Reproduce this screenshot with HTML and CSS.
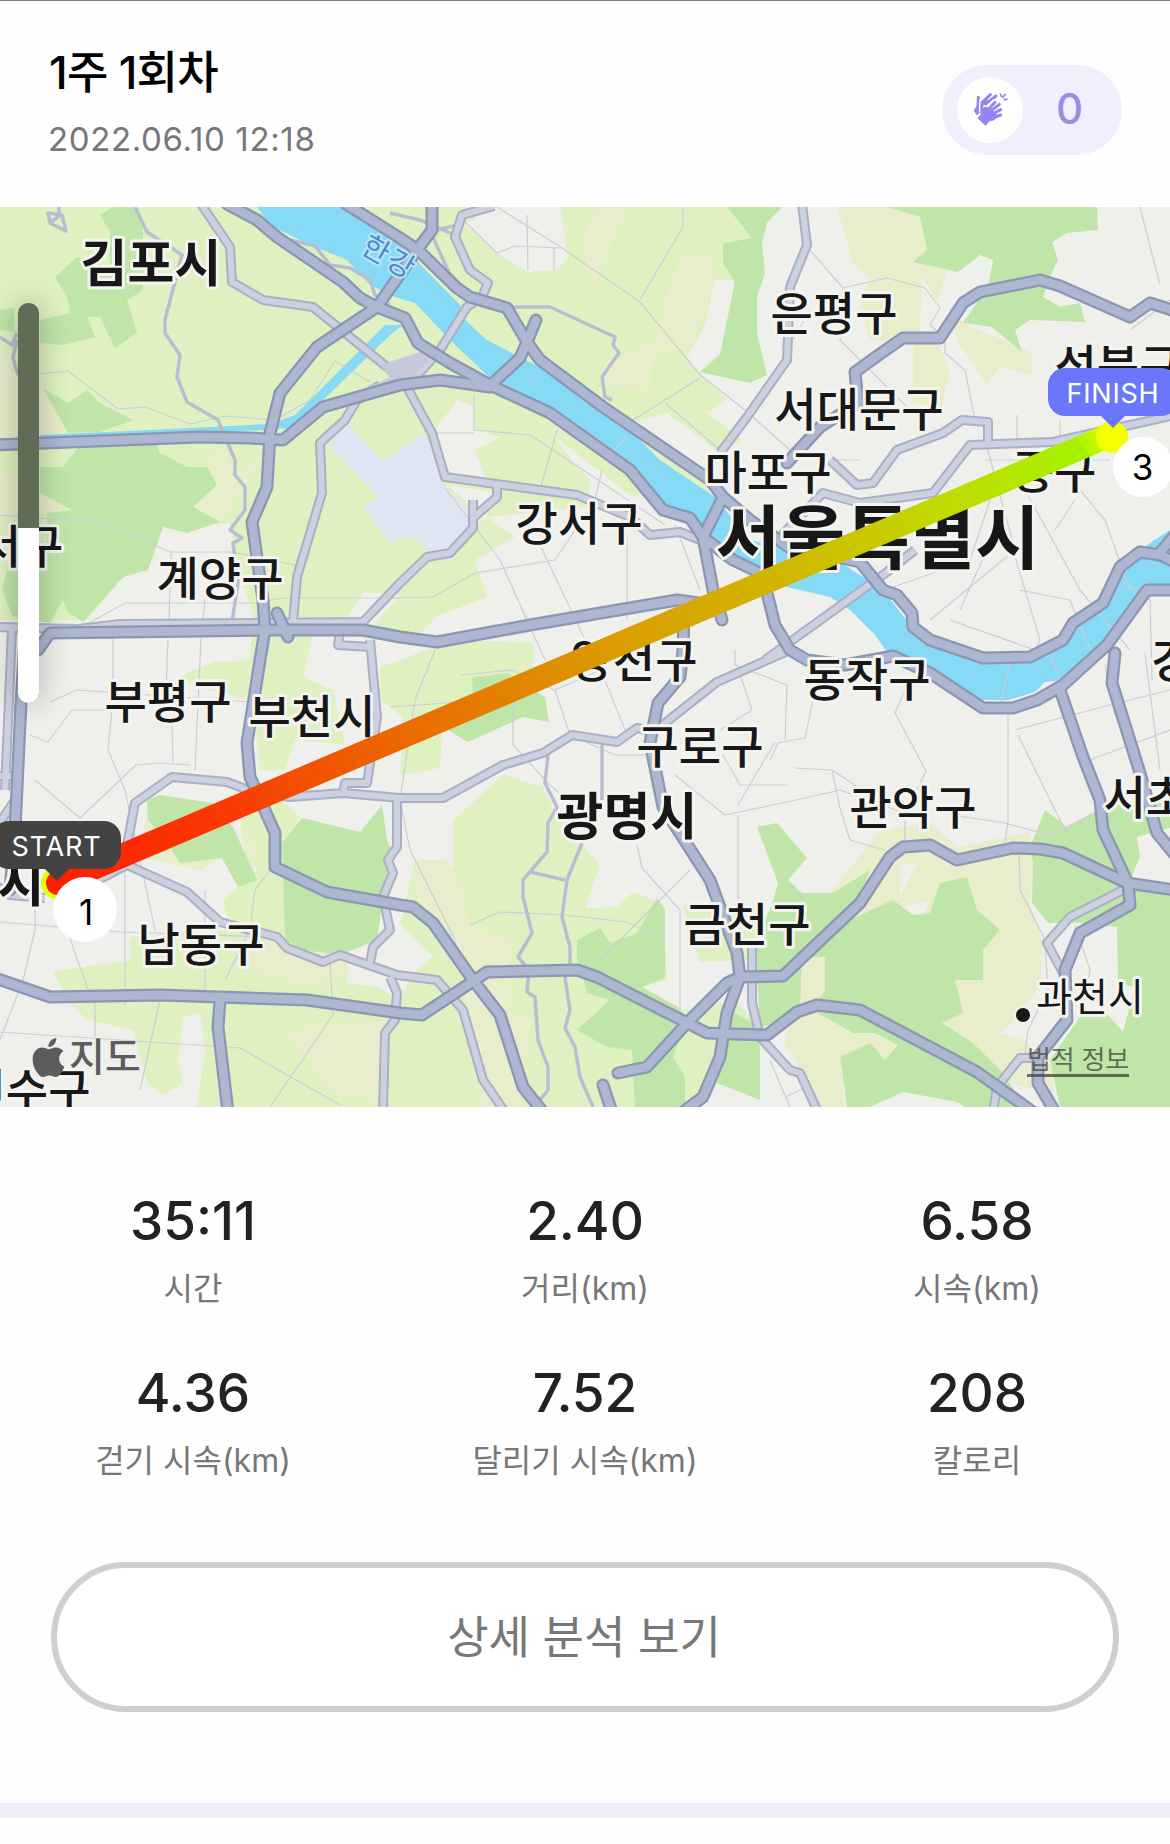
FILE: index.html
```html
<!DOCTYPE html>
<html lang="ko">
<head>
  <meta charset="UTF-8">
  <meta name="viewport" content="width=device-width, initial-scale=1.0">
  <title>1주 1회차</title>
  <link rel="stylesheet" href="styles.css">
</head>
<body>
  <header class="header">
    <div class="header-text">
      <h1 class="title">1주 1회차</h1>
      <p class="date">2022.06.10 12:18</p>
    </div>
    <button class="clap">
      <span class="clap-icon">
        <svg viewBox="0 0 150 150" width="50" height="50">
          <defs>
            <g id="front-hand" stroke-linecap="round" stroke-linejoin="round">
              <path d="M51 52L50 82M62 82L90 52M70 84L103 58M78 90L107 74M86 98L107 90" stroke-width="9" fill="none"/>
              <path d="M50 76L60 66 78 72 98 92 88 104 72 108 62 121 39 99 49 88Z" stroke-width="3"/>
            </g>
          </defs>
          <g stroke="currentColor" fill="none" stroke-linecap="round">
            <path d="M40 37L39 68M50 54L76 29M60 58L93 33" stroke-width="9"/>
            <path d="M106 27l3 7M121 28l-8 9M126 43l-9 1" stroke-width="5"/>
          </g>
          <path fill="currentColor" d="M35 62L50 46 70 46 60 75 38 94 26 77Z"/>
          <use href="#front-hand" class="clap-gap"/>
          <use href="#front-hand" fill="currentColor" stroke="currentColor"/>
        </svg>
      </span>
      <span class="clap-count">0</span>
    </button>
  </header>

  <section class="map">
    <svg class="map-canvas" viewBox="0 207 1170 900" width="1170" height="900">
      <defs>
        <linearGradient id="pace" gradientUnits="userSpaceOnUse" x1="57" y1="884" x2="1113" y2="434">
          <stop offset="0" stop-color="#ff1e00"/>
          <stop offset=".14" stop-color="#fb3502"/>
          <stop offset=".33" stop-color="#ea6a00"/>
          <stop offset=".52" stop-color="#db9a02"/>
          <stop offset=".7" stop-color="#d0b900"/>
          <stop offset=".85" stop-color="#c0dc00"/>
          <stop offset=".97" stop-color="#a6f200"/>
          <stop offset="1" stop-color="#f4ff00"/>
        </linearGradient>
        <g id="highways">
          <path d="M227 204L257 220 277 237 343 282 360 298 377 307 405 318 418 343 450 363 490 385 550 413 630 470 663 510 690 518 703 537 733 560 760 573 767 593 775 625 790 650 807 660 845 665 893 656 930 673 983 708 1013 708 1037 700 1063 685 1107 645 1147 590 1175 590"/>
          <path d="M346 204L400 238 418 250 457 288 470 297 507 308 527 342 540 360 603 407 710 480 723 497 750 520 790 548 837 557 860 562 883 590 897 595 912 613 913 627 930 640 983 658 1030 657 1063 640 1073 623 1103 603 1120 567 1140 552 1160 555 1175 562M1158 555L1175 535"/>
          <path d="M432 202V230L417 250 377 307 317 347 280 393 270 433 267 487 252 522 263 600 265 630 260 660 247 743 250 777 275 833 275 867 327 892 400 905 413 907 433 923 473 980 500 1015 523 1087 543 1112"/>
          <path d="M-5 445L200 437 250 438 283 440 323 407 400 385 440 380 490 387"/>
          <path d="M38 650L50 633 267 630 363 630 400 637 437 642 530 625 677 600 705 604"/>
          <path d="M25 640L21 703 15 830 10 890"/>
          <path d="M723 497L703 537 713 590 722 620"/>
          <path d="M684 610L683 650 680 677 658 703 650 743 663 807 710 880 737 953 740 977 727 1013 723 1037 720 1057 703 1097 683 1112"/>
          <path d="M-5 978L50 997 160 995 307 1000 400 1013 422 1015 487 972 577 970 597 977 707 1033 767 1035 797 1012 817 1005 860 1010 977 1072 1033 1112"/>
          <path d="M220 1000L218 1027 228 1112"/>
          <path d="M618 1073L647 1067 687 1023 727 983 740 977 783 976 860 903 890 857 903 847 930 845 957 860 1013 848 1040 849 1063 853 1127 883 1175 890"/>
          <path d="M1060 690L1083 757 1100 800 1103 830 1128 883 1130 905 1080 933 1065 970 1067 1020 1038 1057 1038 1083 1055 1112"/>
          <path d="M1115 653L1112 683 1140 773 1157 833 1175 855"/>
          <path d="M787 463L820 427 858 403 855 372 880 354 903 338 940 338 963 303 980 292 1040 280 1060 286 1130 317 1150 303 1175 311"/>
          <path d="M536 320L527 342 520 358 493 383"/>
          <path d="M603 1085L612 1112M277 613L288 637"/>
        </g>
        <g id="streets">
          <path d="M201 204L230 247 232 282 263 300 313 307 387 367 405 372"/>
          <path d="M380 385L357 400 345 420 320 443 322 493 297 577 293 622"/>
          <path d="M70 630L120 624 363 622 400 583 427 557 450 553 473 528 473 500M473 518L497 497V483"/>
          <path d="M403 380L432 433 445 477 577 495 630 517 650 535 680 532 703 541"/>
          <path d="M494 206L462 215 455 237 470 270 488 283 482 297 467 307 440 350 407 387"/>
          <path d="M802 204L807 245 790 287 787 360 747 417 720 453"/>
          <path d="M830 460L857 485 873 483 897 450 943 433 962 420 988 422 988 446"/>
          <path d="M780 537L823 493 860 503 933 493 970 445 1053 442 1175 415"/>
          <path d="M765 660L887 572 915 550"/>
          <path d="M660 727L717 682 795 648"/>
          <path d="M127 845L135 803 172 777 227 782 253 792 290 797 343 793 400 798 443 798 503 765 543 753 572 735 617 742 637 728 655 732"/>
          <path d="M370 640L377 717 367 783 345 783 343 793M340 632L338 645 370 647"/>
          <path d="M397 800V847L388 860 393 873 383 897 390 930 373 947 370 963"/>
          <path d="M90 884L127 865 187 892 220 922 277 937 287 948 323 962 340 955 397 975 437 980 463 1010 483 1080 505 1112"/>
          <path d="M390 977L397 993 395 1020 385 1033 383 1112"/>
          <path d="M752 945V1003L760 1037 790 1070 800 1073 818 1112"/>
          <path d="M1123 890L1070 917 1047 943 1063 973"/>
          <path d="M1040 1058H1020L997 1087 993 1112"/>
          <path d="M-5 627L75 629M12 630L5 790M-5 776H12M-5 830L15 800M-5 885L10 895 45 898"/>
        </g>
      </defs>

      <rect class="land" y="207" width="1170" height="900"/>

      <!-- lowland -->
      <path class="field" d="M0 207H730L752 238 723 243 735 282 720 355 700 372 727 400 707 413 742 440 720 453 667 413 633 422 710 487 700 522 655 500 630 495 555 437 575 465 590 480 588 507 487 517 515 537 475 560 487 597 440 615 410 642 313 633 303 677 333 690 345 745 295 740 285 770H260L250 660 253 613 238 570 230 523 163 527 123 577 87 620H0Z"/>
      <path class="field" d="M173 680L213 662 253 660 247 700ZM380 667L427 650 457 640 533 643V667L457 703 443 717 440 768 400 775 403 717 380 700ZM360 590L395 592 390 615 365 625Z"/>
      <path class="field" d="M260 783L300 817 282 850 287 943 227 917 223 900 257 870 240 827Z"/>
      <path class="field" d="M53 972L130 960V937L233 930 290 947 347 960V983L377 987 400 1000 415 970 432 957 400 925 415 860 453 870V820L503 775 543 787 558 817 600 865 585 908 617 907 633 892 663 903 667 980 643 987 683 1010 735 1000 760 1027 700 1107H197L205 1050 200 1013 183 1017 178 1060 183 1083 163 1095 147 1083 133 1030 87 1020 70 1003ZM683 905L760 905 765 960 700 962Z"/>

      <!-- built-up pockets -->
      <path class="land" d="M465 225L497 253 527 272 557 270 568 257 560 207H490ZM715 280H735L720 353 698 372 687 357 705 325ZM435 430L457 400 473 407 475 430 500 437 475 450 487 483 445 477ZM447 485L492 492 487 517 472 528 470 505ZM363 592L400 595 375 624 345 622ZM397 920L432 957 410 977 385 970 375 950Z"/>

      <!-- dry hills -->
      <path class="hill" d="M0 350L43 388 68 433 0 440ZM0 470L40 493 72 510 0 515ZM213 453L225 447 232 475 260 463 233 503 220 522 193 507 217 485 207 467ZM587 225L600 207H627L593 290 585 260ZM678 260L710 252 715 280 690 350 655 350 650 390 607 385 605 365 655 340Z"/>
      <path class="hill" d="M837 207L853 263 870 277 860 307 870 340 913 343V403L942 407 950 370 938 343 920 330 922 275 937 303 947 270 913 262 927 250 920 217 887 207ZM950 307L957 340 987 385 1000 367 1032 375V353L1015 345 963 323Z"/>
      <path class="hill" d="M147 805L140 857 200 870 225 855ZM240 825L260 850 250 880ZM287 940L340 955 350 975 300 985 240 965 235 945ZM280 1030L390 1020 388 1107 330 1090 300 1050ZM417 860H447L460 885 470 925 510 940V1010L530 1020 520 1107H480L460 960 415 905Z"/>
      <path class="hill" d="M790 957H825V1000L850 1040 890 1060 840 1060 845 1107H820L800 1050 785 1050ZM880 830L930 823 957 847 1030 832 1033 863 1030 903 1043 943 1040 997 1000 1033 1023 1040 1053 1067V1097L1003 1080 960 1050 880 1060 870 1043 930 900 850 920 830 893Z"/>

      <!-- forest -->
      <path class="forest" d="M100 215L113 207H135L143 230V290L127 300 137 333 115 348 100 317 87 317 95 337 63 345 40 343V320L70 313 67 297 55 277 77 257 110 267V232ZM0 310L14 308V332L0 330ZM43 388L68 403 87 390 100 403 133 420 100 432 68 433Z"/>
      <path class="forest" d="M80 445H157L160 453 187 467H207L217 485 193 507 220 522 187 533 163 527 148 570 123 577 83 622 68 612 63 600 50 623 13 617 2 590 7 570 47 567V513L72 510 40 493V467L63 467Z"/>
      <path class="forest" d="M727 207L752 238 723 243V263L735 282 720 355 700 372 750 383 767 375 757 333V297L765 273 762 243 767 223 782 207Z"/>
      <path class="forest" d="M887 207L920 217 927 250 913 262 958 272 980 255 993 260 988 287 963 323 992 327 1022 352 1015 330 1030 320 1085 322 1080 303 1060 307 1043 297 1050 277 1058 260 1052 242 1067 233 1098 230 1097 207Z"/>
      <path class="forest" d="M472 678L507 673 545 697 549 722 523 717 468 742 448 730 474 712ZM147 800L160 795 213 803 233 827 257 880 238 887 222 858 180 863 167 843 148 820ZM282 843L302 818 360 832 382 805 387 840 392 850 383 897 377 940 340 955 303 950 285 940Z"/>
      <path class="forest" d="M577 940L600 928 610 943 637 933 657 898 665 910V978L642 987 678 1007 687 1020 673 1057 685 1077V1107H635L632 1050 607 1047 577 1030 610 1000 587 993 583 977 577 960ZM730 1010L760 1027V1100L717 1083Z"/>
      <path class="forest" d="M757 827L777 823 807 858 788 880 802 893H833L870 870 850 920 893 900 913 915 930 913 940 883 967 877 977 910 1000 930 983 950V980H955L963 1013 942 1023 973 1043 1000 1070 1027 1107H847L840 1057 870 1043 853 1033 817 1013 760 1027 755 940 770 910 778 883ZM800 957H825L817 1005 797 1012Z"/>
      <path class="forest" d="M1045 810L1067 827 1097 810 1120 803H1170V828L1137 837 1140 857 1130 880 1170 893V1107H1060L1050 1060 1080 1017 1105 1012 1123 1032 1135 987 1118 983 1117 927 1077 923 1048 923 1032 903 1033 863 1030 847Z"/>
      <path class="hill" d="M802 957H825V990L815 1005 800 1005ZM817 1013L853 1033 875 1033 898 1045 885 1060 870 1043 840 1057 845 1107H820L790 1050Z"/>
      <path class="land" d="M900 865L917 864 900 897ZM870 1107L903 1092 957 1102 965 1107ZM1055 940L1080 933 1062 965ZM1040 985L1055 1030 1005 1035Z"/>

      <path class="airport" d="M347 423L328 445 377 497 363 507 390 543 413 537 427 550 450 553 472 527 470 510 445 487 432 447 422 433 390 457 383 460Z"/>

      <!-- Han river and the canal -->
      <path class="water" d="M257 207H345L400 245 418 262 460 305 465 320 487 340 525 360 555 375 630 430 660 460 715 497 750 540 837 560 883 590 912 627 983 660 1030 657 1063 640 1103 603 1120 567 1150 543 1170 530V590L1147 592 1107 650 1063 680 1045 682 1035 692 1008 700 983 700 930 673 887 652 875 635 850 610 830 597 770 583 740 570 703 537 660 503 610 450 550 413 490 378 450 340 415 303 395 297 370 285 347 260 310 245 270 225Z"/>
      <path class="water" d="M40 435L150 430 270 424 295 415 385 325H403L390 335 315 408 290 428 265 430 150 434 40 438Z"/>

      <g class="lane">
        <path d="M40 374L68 371 118 409 145 407 190 424 225 416 275 420 310 400 335 361 370 382M0 515L105 523 170 552H232L300 566M80 628L125 603H255L283 598H400M171 552L169 620M205 600L200 650M113 635V700L108 750 125 790 155 930M168 640L166 690M50 702L77 690 250 702M72 710H120M30 735L48 742 72 710M35 780L80 818 136 765 160 763 190 765M172 725L173 762 M201 640L195 770"/>
        <path d="M125 865V1005M35 905V930L23 980 0 1040M0 922L120 932 270 937M67 930L90 995M95 1000V1037M0 1032L240 1048 340 1105M160 1000L140 1090M330 960L333 1015 270 1107M205 890V990M270 870L255 890 250 930 225 980"/>
        <path d="M497 207L562 248 640 302 700 375 745 410 790 450M683 207V227L640 300M465 222L497 253 515 246 560 248M527 215L528 270M554 248V270M633 420L700 378M474 395V430L530 435 595 478 665 525M435 433H474M557 430L540 490M602 470L595 500 555 560 475 573 433 597 390 598M445 488L500 560 545 660M627 535V620M540 545L590 650M675 525L700 590M627 435L610 455M665 403L720 450"/>
        <path d="M809 249L843 288 887 278 925 288 940 308 930 325 945 338V353L965 370 975 420M843 288L840 340 910 410M860 460L835 460M930 620L1015 550 985 440M885 590L970 560 990 500M960 610L1000 520M950 620L1035 650 1040 640 1010 540M1020 590L1070 600 1095 660M1025 490L1080 590 1130 650M1080 490L1105 520 1130 590M1140 207L1160 285M1170 300L1130 330M985 460H1110M1060 420V445M1017 415V450M810 310L790 345M1055 530L1075 500"/>
        <path d="M435 650L415 700 400 800 410 850 455 940 458 965M461 675L512 670 555 690 600 670M513 690V745L550 785 600 830M555 690L570 735 615 755H645M605 680L625 730M390 707L460 702M637 845L642 868 680 910V1010M470 925L500 912 565 915 627 922 665 938M600 960L690 870M735 650V665L787 685 785 740M737 665L752 710 720 730M787 785L740 785 723 755M675 775L725 815 787 802 840 790 910 815M738 815V900M738 805L775 742"/>
        <path d="M814 695L805 738 778 743 770 760M905 690L895 713 926 771 905 815V840M1008 710V820L1005 842M832 770L840 808 850 840 885 850M795 768L832 770 870 795M950 815L1000 822 1050 835 1097 812M1018 735L1065 830M1015 730L1110 705 1170 690M1090 760L1170 730M1145 653L1160 770M1115 715L1105 665M1019 850L1020 890 1045 940M1075 925L1090 970 1085 1000M1045 945L1048 990 1028 1030 1024 1060M770 1060L790 1107M785 1097L805 1088M1013 650L1000 705M1050 655L1065 690M1120 580L1150 600 1152 680"/>
      </g>
      <g class="road">
        <path d="M135 207L147 232 182 255 165 320V333L180 355 177 377 187 402 218 420 235 460V475L245 487V510L230 530 242 538 233 543 238 583 232 622"/>
        <path d="M0 337L12 345 17 333M17 340L13 358 18 375M48 213L50 223 66 231 62 215ZM59 205V216L50 223"/>
        <path d="M290 240L315 246 330 265 350 268 370 280 375 295 390 305M390 213L420 220 455 235M432 235L450 275"/>
        <path d="M548 755L545 783 557 807 548 823 547 852 523 880V897L532 933 518 957 529 970 527 992 535 997 538 1040 548 1067V1090L540 1100"/>
        <path d="M582 843L567 880 562 917 570 947V965L565 978 570 1010 565 1028 575 1047 580 1077 593 1107M530 872L565 880M602 743V800M437 230L462 224"/>
        <path d="M507 307L550 307 615 337 613 345 619 353 602 377 605 397 612 400"/>
      </g>
      <use href="#streets" class="street-case"/>
      <use href="#streets" class="street"/>
      <path class="junction" d="M380 365L420 352 430 358 405 385 360 397 365 388 390 378Z"/>
      <use href="#highways" class="highway-case"/>
      <use href="#highways" class="highway"/>

      <text class="river-name" transform="translate(384 266) rotate(30)">한강</text>

      <g class="city">
        <text x="151" y="282">김포시</text>
        <text x="627" y="835">광명시</text>
        <text x="-26" y="902">인천시</text>
      </g>
      <g class="district">
        <text x="834" y="330">은평구</text>
        <text x="859" y="426">서대문구</text>
        <text x="1118" y="383">성북구</text>
        <text x="768" y="489">마포구</text>
        <text x="1054" y="488">중구</text>
        <text x="579" y="540">강서구</text>
        <text x="21" y="563">서구</text>
        <text x="220" y="595">계양구</text>
        <text x="168" y="718">부평구</text>
        <text x="312" y="733">부천시</text>
        <text x="634" y="677">양천구</text>
        <text x="700" y="763">구로구</text>
        <text x="747" y="941">금천구</text>
        <text x="867" y="696">동작구</text>
        <text x="913" y="824">관악구</text>
        <text x="1167" y="814">서초구</text>
        <text x="1215" y="677">강남구</text>
        <text x="201" y="961">남동구</text>
        <text x="27" y="1107">연수구</text>
      </g>
      <text class="capital" x="878" y="564">서울특별시</text>
      <text class="town" x="1090" y="1011">과천시</text>
      <circle class="town-dot" cx="1023" cy="1015" r="8"/>

      <circle cx="57" cy="883" r="16" fill="#e6ff00"/>
      <path class="route" d="M58 883L1113 434"/>
      <circle cx="1112" cy="437" r="16" fill="#f4ff00"/>
    </svg>

    <div class="zoom-track"><div class="zoom-fill"></div></div>

    <span class="marker marker-start">1</span>
    <span class="flag flag-start">START</span>
    <span class="marker marker-finish">3</span>
    <span class="flag flag-finish">FINISH</span>

    <div class="map-brand">
      <svg viewBox="0 0 24 24" width="39" height="39" fill="currentColor">
        <path d="M12.152 6.896c-.948 0-2.415-1.078-3.96-1.04-2.04.027-3.91 1.183-4.961 3.014-2.117 3.675-.546 9.103 1.519 12.09 1.013 1.454 2.208 3.09 3.792 3.039 1.52-.065 2.09-.987 3.935-.987 1.831 0 2.35.987 3.96.948 1.637-.026 2.676-1.48 3.676-2.948 1.156-1.688 1.636-3.325 1.662-3.415-.039-.013-3.182-1.221-3.22-4.857-.026-3.04 2.48-4.494 2.597-4.559-1.429-2.09-3.623-2.324-4.39-2.376-2-.156-3.675 1.09-4.61 1.09zM15.53 3.83c.843-1.012 1.4-2.427 1.245-3.83-1.207.052-2.662.805-3.532 1.818-.78.896-1.454 2.338-1.273 3.714 1.338.104 2.715-.688 3.559-1.701"/>
      </svg>
      <span>지도</span>
    </div>
    <a class="map-legal">법적 정보</a>
  </section>

  <section class="stats">
    <div class="stat"><strong class="stat-value">35:11</strong><span class="stat-label">시간</span></div>
    <div class="stat"><strong class="stat-value">2.40</strong><span class="stat-label">거리(km)</span></div>
    <div class="stat"><strong class="stat-value">6.58</strong><span class="stat-label">시속(km)</span></div>
    <div class="stat"><strong class="stat-value">4.36</strong><span class="stat-label">걷기 시속(km)</span></div>
    <div class="stat"><strong class="stat-value">7.52</strong><span class="stat-label">달리기 시속(km)</span></div>
    <div class="stat"><strong class="stat-value">208</strong><span class="stat-label">칼로리</span></div>
  </section>

  <button class="detail-button">상세 분석 보기</button>

  <div class="divider"></div>
</body>
</html>
```

FILE: styles.css
```css
/* Base styles */
* {
  box-sizing: border-box;
}

body {
  margin: 0;
  width: 1170px;
  height: 1844px;
  overflow: hidden;
  display: flex;
  flex-direction: column;
  background: #fefefe;
  border-top: 1px solid #808080;
  font-family: Inter, "Noto Sans CJK KR", sans-serif;
  color: #222;
}

button {
  font-family: inherit;
  border: none;
  padding: 0;
}

/* Header */
.header {
  display: flex;
  justify-content: space-between;
  align-items: flex-start;
  height: 206px;
  padding: 41px 48px 0 49px;
}

.title {
  margin: 0;
  font-size: 45px;
  line-height: 62px;
  font-weight: 500;
  letter-spacing: -0.8px;
  color: #000;
}

.date {
  margin: 15px 0 0 -1px;
  font-size: 33px;
  line-height: 40px;
  letter-spacing: 0.65px;
  color: #777;
}

.clap {
  display: flex;
  align-items: center;
  width: 180px;
  height: 90px;
  margin-top: 23px;
  padding-left: 15px;
  border-radius: 45px;
  background: #f1eefe;
  color: #9784ee;
}

.clap-icon {
  display: flex;
  align-items: center;
  justify-content: center;
  width: 66px;
  height: 66px;
  border-radius: 50%;
  background: #fff;
}

.clap-gap {
  fill: #fff;
  stroke: #fff;
  transform: translate(-4px, -5px);
}

.clap-count {
  flex: 1;
  padding-right: 6px;
  text-align: center;
  font-size: 42px;
  line-height: 50px;
  margin-top: -2px;
  font-weight: 500;
  color: #9b8de4;
}

/* Map */
.map {
  position: relative;
  height: 900px;
  overflow: hidden;
}

.map-canvas {
  display: block;
}

.land { fill: #eff0eb; }
.field { fill: #dff1c0; }
.hill { fill: #e8edcc; }
.forest { fill: #bfe6a8; }
.airport { fill: #dfe6f1; }
.water { fill: #86daf6; }
.junction { fill: #c6c9d9; }

.lane,
.road,
.street,
.street-case,
.highway,
.highway-case {
  fill: none;
  stroke-linejoin: round;
}

.lane {
  stroke: #cccdd8;
  stroke-width: 1.2;
}

.road {
  stroke: #b9bdd2;
  stroke-width: 3.5;
}

.street-case {
  stroke: #a9b0c6;
  stroke-width: 10;
}

.street {
  stroke: #cdd0de;
  stroke-width: 6;
}

.highway-case {
  stroke: #8b96b3;
  stroke-width: 13;
  stroke-linecap: round;
}

.highway {
  stroke: #adb7d1;
  stroke-width: 8.5;
  stroke-linecap: round;
}

.map text {
  font-family: "Noto Sans CJK KR", sans-serif;
  text-anchor: middle;
  fill: #171717;
  stroke: #f3f4f0;
  stroke-width: 6px;
  stroke-linejoin: round;
  paint-order: stroke;
}

.city {
  font-size: 51px;
  font-weight: 700;
}

.district {
  font-size: 46px;
  font-weight: 500;
}

.map .capital {
  font-size: 70px;
  font-weight: 700;
  letter-spacing: 0.5px;
}

.map .town {
  font-size: 39px;
}

.map .river-name {
  font-size: 29px;
  fill: #4b8bcb;
  stroke: #b9e6f7;
  stroke-width: 4px;
  letter-spacing: 2px;
}

.town-dot {
  fill: #171717;
  stroke: #f3f4f0;
  stroke-width: 2;
}

.route {
  stroke: url(#pace);
  stroke-width: 24;
  stroke-linecap: round;
}

/* Zoom slider over the map */
.zoom-track {
  position: absolute;
  left: 18px;
  top: 96px;
  width: 21px;
  height: 400px;
  border-radius: 10px;
  overflow: hidden;
  background: #616c56;
  box-shadow: 0 0 30px rgba(0, 0, 0, 0.3);
}

.zoom-fill {
  height: 175px;
  margin-top: 225px;
  background: #fff;
}

/* Route markers */
.marker {
  position: absolute;
  display: flex;
  align-items: center;
  justify-content: center;
  border-radius: 50%;
  background: #fff;
  color: #000;
  font-size: 35px;
}

.marker-start {
  left: 53px;
  top: 670px;
  width: 64px;
  height: 65px;
  padding: 5px 0 0 2px;
}

.marker-finish {
  left: 1113px;
  top: 230px;
  width: 60px;
  height: 60px;
  padding-right: 1px;
}

.flag {
  position: absolute;
  height: 48px;
  border-radius: 17px;
  color: #fff;
  font-size: 27px;
  line-height: 51px;
  letter-spacing: 0.8px;
  text-align: center;
}

.flag::after {
  content: "";
  position: absolute;
  top: 47px;
  left: 50%;
  margin-left: -13px;
  border: 13px solid transparent;
  border-bottom: none;
  border-top-color: inherit;
}

.flag-start {
  left: -8px;
  top: 614px;
  width: 129px;
  background: #434343;
  border-color: #434343;
}

.flag-finish {
  left: 1048px;
  top: 161px;
  width: 130px;
  background: #6a77fb;
  border-color: #6a77fb;
}

.map-brand {
  position: absolute;
  left: 29px;
  top: 826px;
  display: flex;
  align-items: center;
  gap: 1px;
  height: 48px;
  color: #5c5c5c;
  font-size: 39px;
  line-height: 48px;
  font-weight: 500;
}

.map-legal {
  position: absolute;
  left: 1027px;
  top: 839px;
  border-bottom: 3px solid rgba(70, 75, 60, 0.8);
  color: rgba(70, 75, 60, 0.8);
  font-size: 26px;
  line-height: 28px;
  letter-spacing: -0.2px;
}

/* Stats */
.stats {
  display: grid;
  grid-template-columns: repeat(3, 1fr);
  row-gap: 47px;
  margin: 80px -3px 0;
}

.stat {
  display: flex;
  flex-direction: column;
  align-items: center;
}

.stat-value {
  font-size: 53px;
  line-height: 68px;
  font-weight: 500;
}

.stat-label {
  margin-top: 11px;
  font-size: 32px;
  line-height: 46px;
  color: #777;
}

.detail-button {
  height: 150px;
  margin: 78px 51px 0;
  padding: 0 2px 5px 0;
  border: 6px solid #cfcfcf;
  border-radius: 75px;
  background: #fff;
  color: #777;
  font-size: 45px;
}

.divider {
  height: 15px;
  margin-top: 91px;
  background: #eeeff8;
}
```
